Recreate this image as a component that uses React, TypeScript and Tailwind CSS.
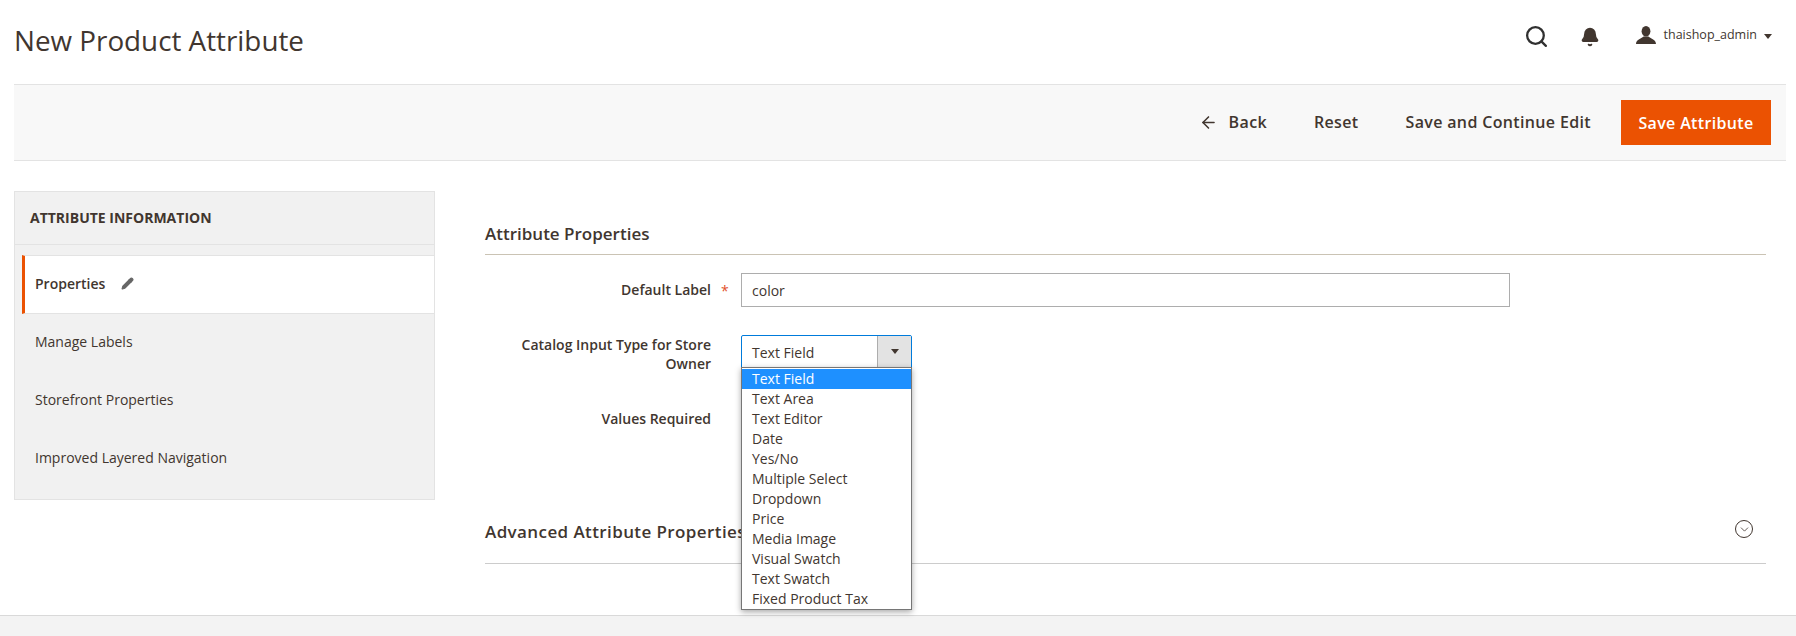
import { Search, Bell, ArrowLeft, ChevronDown, Pencil } from 'lucide-react';

const inputTypes = [
  'Text Field',
  'Text Area',
  'Text Editor',
  'Date',
  'Yes/No',
  'Multiple Select',
  'Dropdown',
  'Price',
  'Media Image',
  'Visual Swatch',
  'Text Swatch',
  'Fixed Product Tax',
];

const navItems = ['Manage Labels', 'Storefront Properties', 'Improved Layered Navigation'];

function Header() {
  return (
    <header className="flex h-[84px] items-start justify-between pl-[14px] pr-[24px]">
      <h1 className="mt-[20px] text-[27.8px] leading-[40px] text-[#41362f]">New Product Attribute</h1>
      <div className="mt-[24px] flex items-center">
        <Search className="h-[25px] w-[25px] text-[#303030]" strokeWidth={2.2} />
        <Bell className="ml-[31px] h-[20px] w-[20px] fill-[#41362f] text-[#41362f]" />
        <svg viewBox="0 0 20 18" className="mb-[3px] ml-[36px] h-[18px] w-[20px] fill-[#41362f]">
          <ellipse cx="10" cy="5.2" rx="4.4" ry="5.2" />
          <path d="M0 18C0 13.5 5 12.8 7.6 10.5L12.4 10.5C15 12.8 20 13.5 20 18Z" />
        </svg>
        <span className="mb-[3px] ml-[8px] text-[12.5px] text-[#41362f]">thaishop_admin</span>
        <span className="mb-[1px] ml-[7px] h-0 w-0 border-x-[4px] border-t-[5px] border-x-transparent border-t-[#41362f]" />
      </div>
    </header>
  );
}

function Toolbar() {
  return (
    <div className="ml-[14px] mr-[10px] flex h-[77px] items-center justify-end border-y border-[#e3e3e3] bg-[#f8f8f8] pr-[15px] text-[16px] font-semibold tracking-[0.35px] text-[#41362f]">
      <ArrowLeft className="h-[19px] w-[19px]" strokeWidth={2} />
      <span className="mb-[1px] ml-[11px]">Back</span>
      <span className="mb-[1px] ml-[47px]">Reset</span>
      <span className="mb-[1px] ml-[47px]">Save and Continue Edit</span>
      <button className="ml-[30px] h-[45px] w-[150px] bg-[#eb5202] text-white">Save Attribute</button>
    </div>
  );
}

function Sidebar() {
  return (
    <aside className="h-[309px] w-[421px] shrink-0 border border-[#e3e3e3] bg-[#f1f1f1] text-[14px] text-[#41362f]">
      <div className="flex h-[53px] items-center border-b border-[#e3e3e3] pb-[2px] pl-[15px] text-[14px] font-bold">
        ATTRIBUTE INFORMATION
      </div>
      <div className="ml-[7px] mt-[10px] flex h-[59px] items-center border-y border-[#e3e3e3] border-l-[3px] border-l-[#eb5202] bg-white pb-[2px] pl-[10px] font-semibold">
        Properties
        <Pencil className="ml-[16px] h-[13px] w-[13px] fill-[#666] text-[#666]" />
      </div>
      {navItems.map((item) => (
        <div key={item} className="flex h-[58px] items-center pb-[4px] pl-[20px]">
          {item}
        </div>
      ))}
    </aside>
  );
}

function InputTypeSelect() {
  return (
    <div className="relative w-[171px]">
      <div className="flex h-[33px] items-center justify-between rounded-t-[2px] border border-[#007bdb] bg-white pl-[10px] pt-[1px] text-[14px] text-[#41362f]">
        Text Field
        <div className="-mt-[1px] flex h-[31px] w-[34px] items-center justify-center border-l border-[#adadad] bg-[#e3e3e3]">
          <span className="h-0 w-0 border-x-[4px] border-t-[5px] border-x-transparent border-t-[#41362f]" />
        </div>
      </div>
      <ul className="absolute left-0 top-[32px] z-10 w-full border border-[#767676] bg-white pt-px text-[14px] leading-[20px] text-[#41362f] shadow-[0_2px_6px_rgba(0,0,0,0.35)]">
        {inputTypes.map((type, i) => (
          <li key={type} className={i === 0 ? 'bg-[#1e90ff] pl-[10px] text-white' : 'pl-[10px]'}>
            {type}
          </li>
        ))}
      </ul>
    </div>
  );
}

function AttributeForm() {
  return (
    <main className="ml-[50px] mr-[30px] min-w-0 flex-1 pt-[30px]">
      <h2 className="border-b border-[#cac3b4] pb-[8px] text-[17px] font-semibold leading-[25px] text-[#41362f]">
        Attribute Properties
      </h2>
      <div className="mt-[18px] flex text-[14px] text-[#41362f]">
        <label className="w-[226px] pt-[6px] text-right font-semibold">Default Label</label>
        <span className="w-[30px] pl-[10px] pt-[7px] text-[#e2502a]">*</span>
        <div className="flex h-[34px] w-[769px] items-center border border-[#adadad] pl-[10px]">color</div>
      </div>
      <div className="mt-[28px] flex text-[14px] text-[#41362f]">
        <label className="w-[226px] text-right font-semibold leading-[19px]">
          Catalog Input Type for Store Owner
        </label>
        <div className="ml-[30px]">
          <InputTypeSelect />
        </div>
      </div>
      <div className="mt-[35px] w-[226px] text-right text-[14px] font-semibold text-[#41362f]">
        Values Required
      </div>
      <div className="mt-[90px] flex h-[45px] items-start justify-between border-b border-[#cccccc] pr-[13px]">
        <h2 className="text-[17px] font-semibold leading-[25px] tracking-[0.4px] text-[#41362f]">
          Advanced Attribute Properties
        </h2>
        <span className="mt-[1px] flex h-[18px] w-[18px] items-center justify-center rounded-full border border-[#41362f]">
          <ChevronDown className="h-[13px] w-[13px] text-[#41362f]" strokeWidth={1.5} />
        </span>
      </div>
    </main>
  );
}

export default function App() {
  return (
    <div className="flex h-[636px] flex-col overflow-hidden bg-white font-['Open_Sans',sans-serif]">
      <Header />
      <Toolbar />
      <div className="flex flex-1 pl-[14px] pt-[30px]">
        <Sidebar />
        <AttributeForm />
      </div>
      <div className="h-[21px] border-t border-[#d9d9d9] bg-[#f3f3f3]" />
    </div>
  );
}
